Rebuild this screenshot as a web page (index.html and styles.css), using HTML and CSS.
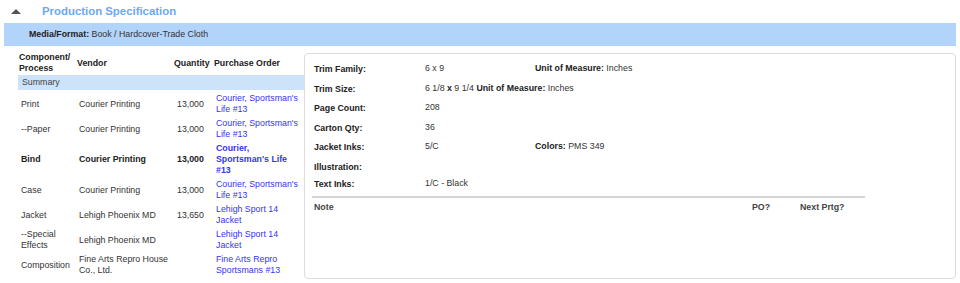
FILE: index.html
```html
<!DOCTYPE html>
<html lang="en">
<head>
    <meta charset="UTF-8">
    <title>Production Specification</title>
    <link rel="stylesheet" href="styles.css">
</head>
<body>

<div class="section-head">
    <span class="toggle"></span>
    <span class="section-title">Production Specification</span>
</div>

<div class="media-bar">
    <b>Media/Format:</b> Book / Hardcover-Trade Cloth
</div>

<div class="spec-body">
    <table class="components">
        <thead>
            <tr>
                <th class="c-comp">Component/<br>Process</th>
                <th class="c-vendor">Vendor</th>
                <th class="c-qty">Quantity</th>
                <th class="c-po">Purchase Order</th>
            </tr>
        </thead>
        <tbody>
            <tr class="summary"><td colspan="4">Summary</td></tr>
            <tr>
                <td>Print</td>
                <td>Courier Printing</td>
                <td>13,000</td>
                <td><a href="#">Courier, Sportsman's Life #13</a></td>
            </tr>
            <tr>
                <td>--Paper</td>
                <td>Courier Printing</td>
                <td>13,000</td>
                <td><a href="#">Courier, Sportsman's Life #13</a></td>
            </tr>
            <tr class="bold">
                <td>Bind</td>
                <td>Courier Printing</td>
                <td>13,000</td>
                <td><a href="#">Courier, Sportsman's Life #13</a></td>
            </tr>
            <tr>
                <td>Case</td>
                <td>Courier Printing</td>
                <td>13,000</td>
                <td><a href="#">Courier, Sportsman's Life #13</a></td>
            </tr>
            <tr>
                <td>Jacket</td>
                <td>Lehigh Phoenix MD</td>
                <td>13,650</td>
                <td><a href="#">Lehigh Sport 14 Jacket</a></td>
            </tr>
            <tr>
                <td>--Special Effects</td>
                <td>Lehigh Phoenix MD</td>
                <td></td>
                <td><a href="#">Lehigh Sport 14 Jacket</a></td>
            </tr>
            <tr>
                <td>Composition</td>
                <td>Fine Arts Repro House Co., Ltd.</td>
                <td></td>
                <td><a href="#">Fine Arts Repro Sportsmans #13</a></td>
            </tr>
        </tbody>
    </table>

    <div class="spec-panel">
        <div class="spec-row">
            <span class="label">Trim Family:</span>
            <span class="value">6 x 9</span>
            <span class="value"><b>Unit of Measure:</b> Inches</span>
        </div>
        <div class="spec-row">
            <span class="label">Trim Size:</span>
            <span class="value wide">6 1/8 <b>x</b> 9 1/4 <b>Unit of Measure:</b> Inches</span>
        </div>
        <div class="spec-row">
            <span class="label">Page Count:</span>
            <span class="value">208</span>
        </div>
        <div class="spec-row">
            <span class="label">Carton Qty:</span>
            <span class="value">36</span>
        </div>
        <div class="spec-row">
            <span class="label">Jacket Inks:</span>
            <span class="value">5/C</span>
            <span class="value"><b>Colors:</b> PMS 349</span>
        </div>
        <div class="spec-row short">
            <span class="label">Illustration:</span>
        </div>
        <div class="spec-row short">
            <span class="label">Text Inks:</span>
            <span class="value">1/C - Black</span>
        </div>

        <div class="notes">
            <span class="note-col">Note</span>
            <span class="po-col">PO?</span>
            <span class="next-col">Next Prtg?</span>
        </div>
    </div>
</div>

</body>
</html>
```

FILE: styles.css
```css
/* Reset */
* {
    margin: 0;
    padding: 0;
    box-sizing: border-box;
}

body {
    font-family: "Liberation Sans", Arial, sans-serif;
    font-size: 8.8px;
    color: #333;
    background-color: #fff;
    width: 960px;
}

/* Section header */
.section-head {
    display: flex;
    align-items: center;
    height: 23px;
    padding-left: 11px;
}

.toggle {
    width: 0;
    height: 0;
    border-left: 5px solid transparent;
    border-right: 5px solid transparent;
    border-bottom: 5px solid #555;
    margin-right: 21px;
    margin-top: -1px;
}

.section-title {
    font-size: 11.4px;
    font-weight: bold;
    color: #6ea8f4;
    margin-top: -2px;
}

/* Media bar */
.media-bar {
    margin: 0 4px;
    height: 23px;
    line-height: 23px;
    padding-left: 25px;
    background-color: #b2d4fa;
    color: #333;
}

.media-bar b {
    color: #222;
}

/* Body */
.spec-body {
    display: flex;
    align-items: flex-start;
    margin: 6px 4px 0 18px;
}

/* Components table */
.components {
    width: 286px;
    border-collapse: collapse;
    line-height: 11px;
    table-layout: fixed;
}

.components th {
    font-weight: bold;
    color: #222;
    text-align: left;
    vertical-align: middle;
    padding: 0 1px 1px 1px;
}

.c-comp { width: 58px; }
.c-vendor { width: 97px; }
.c-qty { width: 40px; }
.c-po { width: 91px; }

.components td {
    padding: 2px 1px 1px 3px;
    vertical-align: middle;
}

.components tr.summary td {
    background-color: #cde3f9;
    padding: 2px 4px;
    color: #444;
}

.components tr.summary + tr td {
    padding-top: 3px;
}

.components tr.bold td {
    font-weight: bold;
    color: #222;
}

.components td:nth-child(3) {
    padding-left: 4px;
}

.components td:nth-child(4) {
    padding-right: 3px;
}

.components a {
    color: #3434f4;
    text-decoration: none;
}

/* Right panel */
.spec-panel {
    flex: 1;
    margin-top: 1px;
    height: 226px;
    border: 1px solid #dcdcdc;
    border-radius: 4px;
    padding: 7px 90px 0 9px;
}

.spec-row {
    display: flex;
    height: 19.5px;
    padding-top: 2px;
}

.spec-row.short {
    height: 17px;
}

.spec-row .label {
    width: 111px;
    font-weight: bold;
    color: #222;
    padding-top: 1px;
}

.spec-row .value {
    width: 110px;
}

.spec-row .value.wide {
    width: auto;
}

.spec-row .value b {
    color: #222;
}

.notes {
    display: flex;
    margin: 3px 0 0 -2px;
    border-top: 2px solid #d4d4d4;
    padding: 4px 0 0 2px;
    font-weight: bold;
    color: #444;
}

.note-col {
    width: 438px;
}

.po-col {
    width: 48px;
}
```
